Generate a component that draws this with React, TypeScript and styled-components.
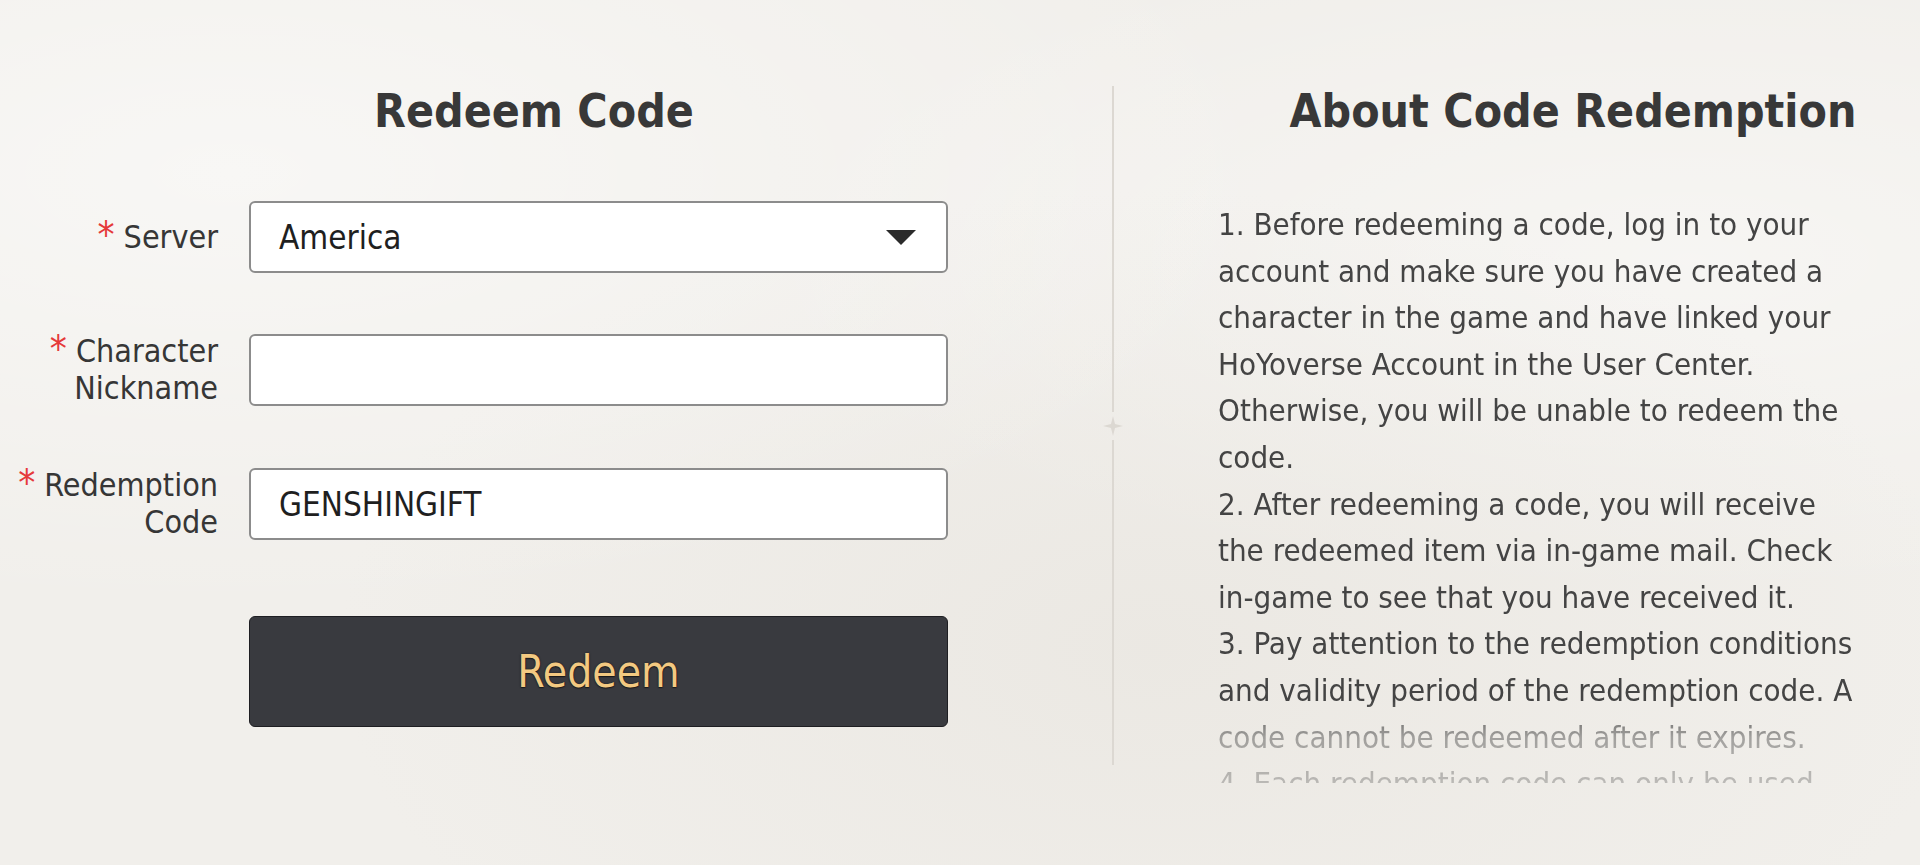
import React from 'react';
import styled, { createGlobalStyle } from 'styled-components';

const GlobalStyle = createGlobalStyle`
  html, body {
    margin: 0;
    padding: 0;
  }
  body {
    width: 1920px;
    height: 865px;
    overflow: hidden;
    background-color: #f1efeb;
    background-image:
      radial-gradient(ellipse at 12% 20%, rgba(255, 255, 255, 0.5), transparent 45%),
      radial-gradient(ellipse at 60% 75%, rgba(228, 224, 217, 0.45), transparent 50%),
      radial-gradient(ellipse at 88% 30%, rgba(255, 255, 255, 0.4), transparent 40%);
    font-family: "DejaVu Sans Condensed", "DejaVu Sans", sans-serif;
  }
`;

const Page = styled.main`
  display: flex;
  align-items: flex-start;
  padding-top: 84px;
  width: 1920px;
  height: 865px;
  box-sizing: border-box;
  overflow: hidden;
`;

const LeftColumn = styled.section`
  width: 1068px;
  flex-shrink: 0;
  display: flex;
  flex-direction: column;
`;

const Title = styled.h2`
  margin: 0;
  font-size: 46px;
  line-height: 55px;
  font-weight: 700;
  color: #383838;
  text-align: center;
`;

const Form = styled.form`
  display: flex;
  flex-direction: column;
  gap: 60px;
  margin-top: 62px;
`;

const Row = styled.div`
  display: flex;
  align-items: center;
  gap: 31px;
`;

const Label = styled.label`
  width: 218px;
  flex-shrink: 0;
  text-align: right;
  font-size: 32px;
  line-height: 37px;
  color: #363636;
`;

const Required = styled.span`
  color: #e5393a;
  font-size: 38px;
  line-height: 0;
  margin-right: 9px;
`;

const fieldBox = `
  box-sizing: border-box;
  width: 699px;
  height: 72px;
  background: #ffffff;
  border: 2px solid #8c8c8c;
  border-radius: 6px;
  padding: 0 28px;
  font-family: "DejaVu Sans Condensed", "DejaVu Sans", sans-serif;
  font-size: 33px;
  color: #1f1f1f;
`;

const Select = styled.div`
  ${fieldBox}
  display: flex;
  align-items: center;
  justify-content: space-between;
  padding-right: 30px;
  cursor: pointer;
`;

const TextInput = styled.input`
  ${fieldBox}
  outline: none;
`;

const ButtonRow = styled.div`
  padding-left: 249px;
  margin-top: 15px;
`;

const RedeemButton = styled.button`
  width: 699px;
  height: 111px;
  background: #393a3f;
  border: 1px solid #1e1e22;
  border-radius: 6px;
  color: #f3c981;
  font-family: "DejaVu Sans Condensed", "DejaVu Sans", sans-serif;
  font-size: 44px;
  text-shadow: 0 0 2px #1a1a1a, 0 1px 1px #1a1a1a;
  cursor: pointer;
`;

const Divider = styled.div`
  margin-left: 30px;
  width: 30px;
  flex-shrink: 0;
  height: 679px;
  margin-top: 2px;
  display: flex;
  flex-direction: column;
  align-items: center;
`;

const DividerLine = styled.div`
  width: 2px;
  flex: 1;
  background: #dcd8d2;
`;

const RightColumn = styled.section`
  margin-left: 90px;
  width: 710px;
  flex-shrink: 0;
  display: flex;
  flex-direction: column;
`;

const Notes = styled.div`
  margin-top: 62px;
  width: 650px;
  height: 582px;
  overflow: hidden;
  font-size: 31px;
  line-height: 46.6px;
  color: #444444;
  -webkit-mask-image: linear-gradient(to bottom, #000 0, #000 500px, rgba(0, 0, 0, 0.45) 536px, rgba(0, 0, 0, 0.3) 100%);
  mask-image: linear-gradient(to bottom, #000 0, #000 500px, rgba(0, 0, 0, 0.45) 536px, rgba(0, 0, 0, 0.3) 100%);
`;

const Note = styled.p`
  margin: 0;
`;

const notes = [
  '1. Before redeeming a code, log in to your account and make sure you have created a character in the game and have linked your HoYoverse Account in the User Center. Otherwise, you will be unable to redeem the code.',
  '2. After redeeming a code, you will receive the redeemed item via in-game mail. Check in-game to see that you have received it.',
  '3. Pay attention to the redemption conditions and validity period of the redemption code. A code cannot be redeemed after it expires.',
  '4. Each redemption code can only be used once per account.',
];

const App: React.FC = () => (
  <>
    <GlobalStyle />
    <Page>
      <LeftColumn>
        <Title>Redeem Code</Title>
        <Form onSubmit={e => e.preventDefault()}>
          <Row>
            <Label>
              <Required>*</Required>Server
            </Label>
            <Select>
              <span>America</span>
              <svg width="30" height="15" viewBox="0 0 30 15">
                <polygon points="0,0 30,0 15,15" fill="#2b2b2b" />
              </svg>
            </Select>
          </Row>
          <Row>
            <Label>
              <Required>*</Required>Character<br />Nickname
            </Label>
            <TextInput type="text" defaultValue="" />
          </Row>
          <Row>
            <Label>
              <Required>*</Required>Redemption<br />Code
            </Label>
            <TextInput type="text" defaultValue="GENSHINGIFT" />
          </Row>
          <ButtonRow>
            <RedeemButton type="submit">Redeem</RedeemButton>
          </ButtonRow>
        </Form>
      </LeftColumn>
      <Divider>
        <DividerLine />
        <svg width="26" height="28" viewBox="0 0 26 28">
          <path d="M13 4 L15 12 L23 14 L15 16 L13 24 L11 16 L3 14 L11 12 Z" fill="#dcd8d2" />
        </svg>
        <DividerLine />
      </Divider>
      <RightColumn>
        <Title>About Code Redemption</Title>
        <Notes>
          {notes.map(n => (
            <Note key={n}>{n}</Note>
          ))}
        </Notes>
      </RightColumn>
    </Page>
  </>
);

export default App;
